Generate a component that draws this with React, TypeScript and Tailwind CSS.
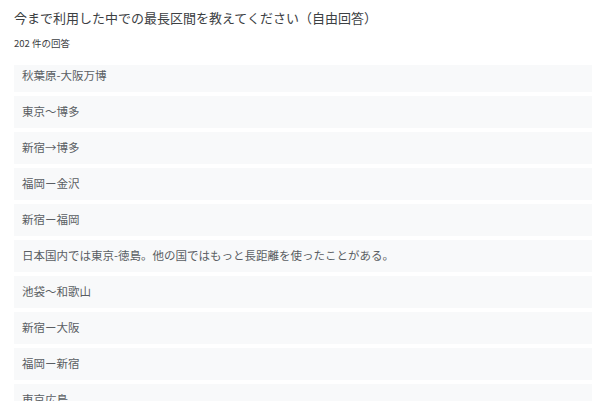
const answers = [
  '秋葉原-大阪万博',
  '東京〜博多',
  '新宿→博多',
  '福岡ー金沢',
  '新宿ー福岡',
  '日本国内では東京-徳島。他の国ではもっと長距離を使ったことがある。',
  '池袋〜和歌山',
  '新宿ー大阪',
  '福岡ー新宿',
  '東京広島',
]

export default function App() {
  return (
    <div
      className="w-[600px] h-[401px] bg-white overflow-hidden flex flex-col"
      style={{ fontFamily: '"Noto Sans CJK JP", "Noto Sans", sans-serif' }}
    >
      <div className="px-[14px] pt-[9px] flex-none">
        <h1 className="text-[13px] leading-[18px] text-[#3c4043]">
          今まで利用した中での最長区間を教えてください（自由回答）
        </h1>
        <p className="text-[9.5px] leading-[12px] text-[#3c4043] mt-[10px]">202 件の回答</p>
      </div>
      <div className="flex-1 overflow-hidden mt-[16px] px-[14px]">
        <div className="flex flex-col gap-1 -mt-[5px] w-[578px]">
          {answers.map((a, i) => (
            <div key={i} className="h-8 flex-none flex items-center px-2 bg-[#f8f9fa] text-[11.5px] text-[#5a5e63]">
              {a}
            </div>
          ))}
        </div>
      </div>
    </div>
  )
}
